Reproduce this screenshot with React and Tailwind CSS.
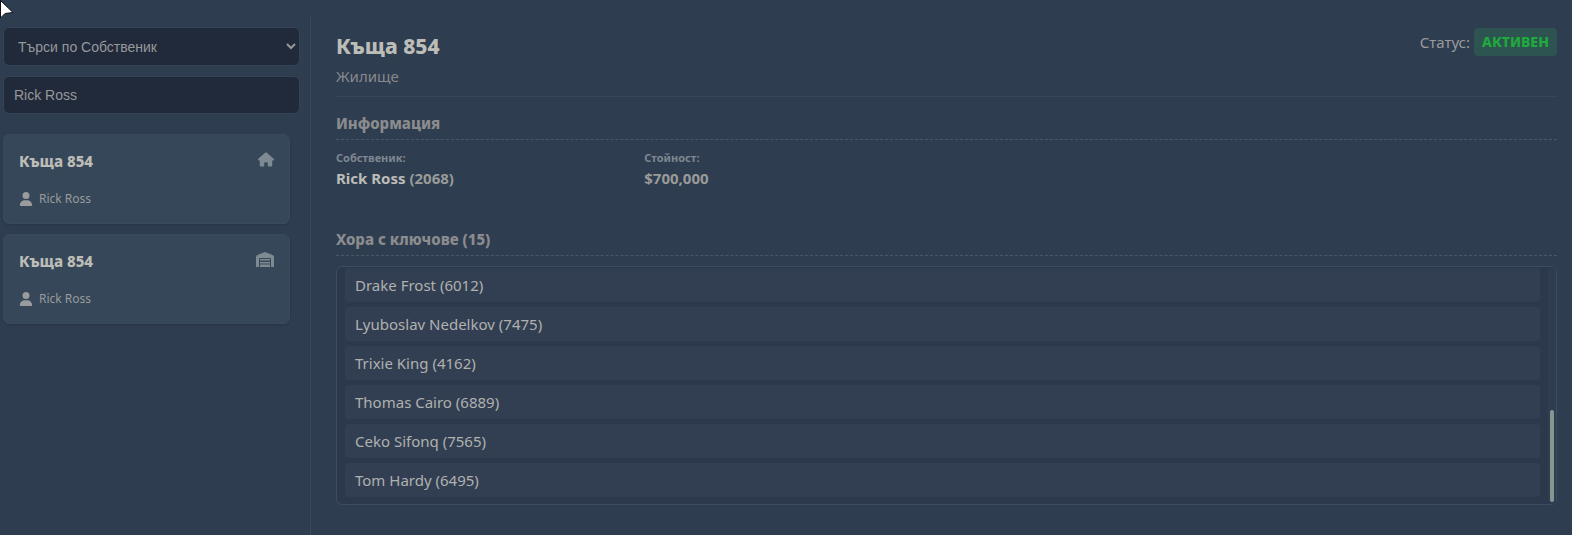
import { useState } from 'react';
import { FaHouse, FaUser } from 'react-icons/fa6';

function GarageIcon({ className }) {
  return (
    <svg className={className} viewBox="0 0 18 15" fill="currentColor" aria-hidden="true">
      <path d="M0 15V5.2Q0 3.6 1.4 3L8.3 0.2Q9 0 9.7 0.2L16.6 3Q18 3.6 18 5.2V15H15V6.8Q15 6 14.2 6H3.8Q3 6 3 6.8V15Z" />
      <path d="M4 7H14V8.6H4ZM4 10H14V11.6H4ZM4 12.4H14V15H4Z" />
    </svg>
  );
}

const properties = [
  { id: 1, name: 'Къща 854', owner: 'Rick Ross', icon: FaHouse, iconClass: 'h-[15px] w-4' },
  { id: 2, name: 'Къща 854', owner: 'Rick Ross', icon: GarageIcon, iconClass: 'h-[15px] w-[18px]' },
];

const keyHolders = [
  { name: 'Drake Frost', cid: 6012 },
  { name: 'Lyuboslav Nedelkov', cid: 7475 },
  { name: 'Trixie King', cid: 4162 },
  { name: 'Thomas Cairo', cid: 6889 },
  { name: 'Ceko Sifonq', cid: 7565 },
  { name: 'Tom Hardy', cid: 6495 },
];

function PropertyCard({ property }) {
  const Icon = property.icon;
  return (
    <button type="button" className="block w-full rounded-md border border-[#3a4a5d] bg-[#364759] px-[15px] py-4 text-left shadow-sm">
      <span className="flex items-start justify-between">
        <span className="text-[15px] leading-5 font-extrabold text-[#bdbdb8]">{property.name}</span>
        <span className="pt-px text-[#7e8a92]"><Icon className={property.iconClass} /></span>
      </span>
      <span className="mt-5 flex items-center gap-1.5 text-xs leading-4 text-[#999b9c]">
        <FaUser className="h-3.5 w-3.5" />
        {property.owner}
      </span>
    </button>
  );
}

function SectionTitle({ children }) {
  return (
    <h2 className="border-b border-dashed border-[#4a586a] pb-1 text-[15px] leading-6 font-extrabold text-[#8b8c8d]">
      {children}
    </h2>
  );
}

function Cursor() {
  return (
    <svg className="pointer-events-none absolute top-0 left-0 h-5 w-4" viewBox="0 0 16 20" aria-hidden="true">
      <path d="M0.5 0.5V18L5 13.5L13 12.5Z" fill="#fff" stroke="#111" strokeWidth="1" />
    </svg>
  );
}

export default function App() {
  const [filter, setFilter] = useState('owner');
  const [query, setQuery] = useState('Rick Ross');

  return (
    <div className="relative flex min-h-screen bg-[#2f3d50] pt-4 font-['Noto_Sans',sans-serif]">
      {/* Sidebar */}
      <aside className="w-[311px] shrink-0 border-r border-[#3b495b] pt-[11px]">
        <div className="flex flex-col gap-2.5 pr-2.5 pl-[3px] font-['Liberation_Sans',sans-serif] text-sm">
          <select aria-label="Филтър" value={filter} onChange={(e) => setFilter(e.target.value)}
            className="h-[39px] w-full rounded-md border border-[#364356] bg-[#202a3b] pl-2.5 text-[#97989a]">
            <option value="owner">Търси по Собственик</option>
            <option value="name">Търси по Име</option>
          </select>
          <input type="text" aria-label="Търсене" value={query} onChange={(e) => setQuery(e.target.value)}
            className="h-[38px] w-full rounded-md border border-[#364356] bg-[#202a3b] px-2.5 text-[#97989a]" />
        </div>
        <div className="mt-5 flex flex-col gap-2.5 pr-5 pl-[3px]">
          {properties.map((p) => <PropertyCard key={p.id} property={p} />)}
        </div>
      </aside>

      {/* Details */}
      <main className="min-w-0 flex-1 pt-3 pr-[15px] pb-6 pl-[25px]">
        <header className="flex items-start justify-between border-b border-[#364559] pb-2">
          <div>
            <h1 className="text-[21px] leading-9 font-extrabold text-[#bdbdb8]">Къща 854</h1>
            <p className="text-[15px] leading-6 text-[#87898c]">Жилище</p>
          </div>
          <div className="flex items-center gap-1 text-[15px] leading-7 text-[#999b9c]">
            Статус:
            <span className="rounded bg-[#2d5450] px-2 text-sm leading-7 font-extrabold text-[#1eaa3c]">АКТИВЕН</span>
          </div>
        </header>

        <section className="mt-3.5">
          <SectionTitle>Информация</SectionTitle>
          <dl className="mt-2.5 grid grid-cols-4 gap-3">
            <div>
              <dt className="text-[11px] leading-4 font-bold text-[#7e8791]">Собственик:</dt>
              <dd className="text-[15px] leading-6 font-bold text-[#999b98]">
                <span className="text-[#bdbdb8]">Rick Ross</span> (2068)
              </dd>
            </div>
            <div>
              <dt className="text-[11px] leading-4 font-bold text-[#7e8791]">Стойност:</dt>
              <dd className="text-[15px] leading-6 font-bold text-[#999b98]">$700,000</dd>
            </div>
          </dl>
        </section>

        <section className="mt-[37px]">
          <SectionTitle>Хора с ключове (15)</SectionTitle>
          <div className="relative mt-2.5 rounded-md border border-[#3d4d61] bg-[#2c384b] pt-px pr-4 pb-[7px] pl-2">
            <ul className="flex flex-col gap-[5px]">
              {keyHolders.map((k) => (
                <li key={k.cid} className="rounded bg-[#323f52] px-2.5 text-[15px] leading-[34px] text-[#b0b1af]">
                  {k.name} ({k.cid})
                </li>
              ))}
            </ul>
            {/* Scrollbar */}
            <div className="absolute inset-y-0 right-0 flex w-2 items-end justify-center rounded bg-[#303d50] pb-0.5">
              <div className="h-[39%] w-1 rounded-full bg-[#879590]" />
            </div>
          </div>
        </section>
      </main>
      <Cursor />
    </div>
  );
}
